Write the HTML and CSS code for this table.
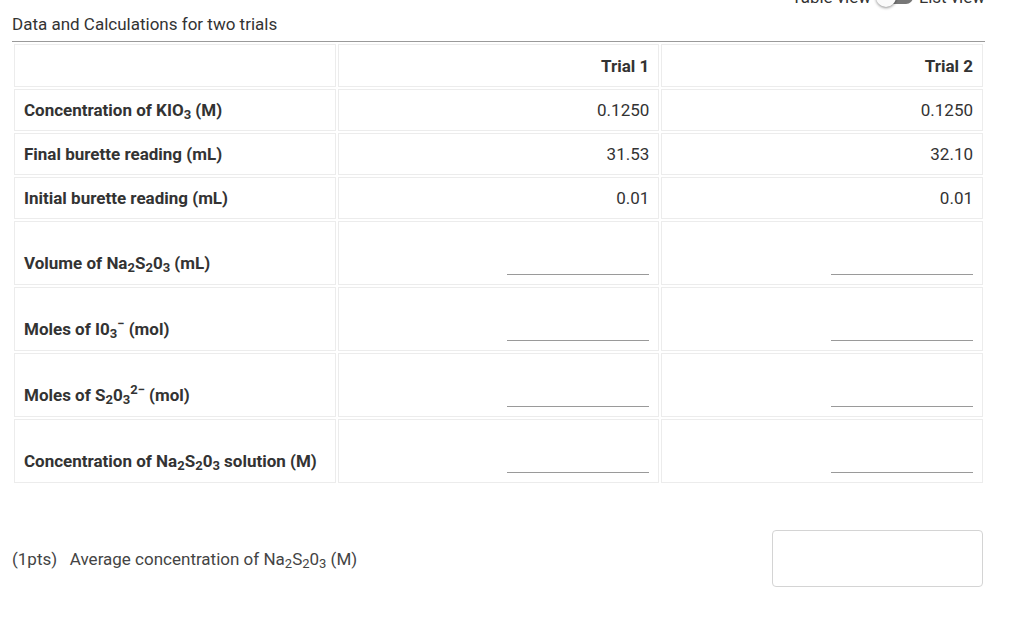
FILE: index.html
```html
<!DOCTYPE html>
<html>
<head>
<meta charset="utf-8">
<link rel="stylesheet" href="styles.css">
</head>
<body>
<div class="page">
  <div class="toggle-row">
    <span class="toggle-label">Table view</span>
    <span class="switch"><span class="knob"></span></span>
    <span class="toggle-label">List view</span>
  </div>
  <div class="title">Data and Calculations for two trials</div>
  <table class="data">
    <tr class="row-head">
      <td class="label"></td>
      <td class="num head">Trial 1</td>
      <td class="num head">Trial 2</td>
    </tr>
    <tr class="row-val">
      <td class="label">Concentration of KIO<sub>3</sub> (M)</td>
      <td class="num val">0.1250</td>
      <td class="num val">0.1250</td>
    </tr>
    <tr class="row-val">
      <td class="label">Final burette reading (mL)</td>
      <td class="num val">31.53</td>
      <td class="num val">32.10</td>
    </tr>
    <tr class="row-val">
      <td class="label">Initial burette reading (mL)</td>
      <td class="num val">0.01</td>
      <td class="num val">0.01</td>
    </tr>
    <tr class="row-in">
      <td class="label">Volume of Na<sub>2</sub>S<sub>2</sub>0<sub>3</sub> (mL)</td>
      <td class="num"><span class="blank"></span></td>
      <td class="num"><span class="blank"></span></td>
    </tr>
    <tr class="row-in">
      <td class="label">Moles of I0<sub>3</sub><sup>−</sup> (mol)</td>
      <td class="num"><span class="blank"></span></td>
      <td class="num"><span class="blank"></span></td>
    </tr>
    <tr class="row-in">
      <td class="label">Moles of S<sub>2</sub>0<sub>3</sub><sup>2−</sup> (mol)</td>
      <td class="num"><span class="blank"></span></td>
      <td class="num"><span class="blank"></span></td>
    </tr>
    <tr class="row-in">
      <td class="label">Concentration of Na<sub>2</sub>S<sub>2</sub>0<sub>3</sub> solution (M)</td>
      <td class="num"><span class="blank"></span></td>
      <td class="num"><span class="blank"></span></td>
    </tr>
  </table>
  <div class="avg">
    <span class="avg-text">(1pts)&nbsp;&nbsp; Average concentration of Na<sub>2</sub>S<sub>2</sub>0<sub>3</sub> (M)</span>
    <span class="avg-box"></span>
  </div>
</div>
</body>
</html>
```

FILE: styles.css
```css
html, body {
  margin: 0;
  padding: 0;
  background: #fff;
}
body {
  font-family: Roboto, "Liberation Sans", sans-serif;
  color: #333;
  overflow: hidden;
}
.page {
  padding: 0 39px 0 12px;
}
.toggle-row {
  display: flex;
  justify-content: flex-end;
  align-items: center;
  height: 20px;
  margin-top: -13px;
  font-size: 17px;
  color: #333;
}
.toggle-label {
  line-height: 20px;
}
.switch {
  position: relative;
  width: 34px;
  height: 14px;
  margin: 0 6px 0 8px;
  background: #777;
  border-radius: 7px;
}
.knob {
  position: absolute;
  left: -3px;
  top: -3px;
  width: 20px;
  height: 20px;
  border-radius: 50%;
  background: #fafafa;
  box-shadow: 0 1px 3px rgba(0,0,0,0.45);
}
.title {
  margin-top: 7px;
  font-size: 17px;
  line-height: 20px;
  padding-bottom: 7px;
  border-bottom: 1px solid #9a9a9a;
}
.data {
  width: 100%;
  border-collapse: separate;
  border-spacing: 2px;
  table-layout: fixed;
  margin: 0;
}
.data td {
  box-sizing: border-box;
  border: 1px solid #ececec;
  padding: 0 9px;
}
.label {
  font-size: 17px;
  font-weight: 700;
  color: #333;
  text-align: left;
}
.num {
  text-align: right;
}
.head {
  font-size: 17px;
  font-weight: 700;
}
.val {
  font-size: 17px;
}
.row-head td { height: 43px; }
.row-val td { height: 42px; }
.row-val td.label { padding-top: 0; }
.row-in td {
  height: 64px;
  vertical-align: bottom;
  padding-bottom: 9px;
}
.row-in td.label {
  padding-bottom: 11px;
  line-height: 20px;
}
.blank {
  display: inline-block;
  width: 142px;
  height: 30px;
  border-bottom: 1px solid #9a9a9a;
  vertical-align: bottom;
}
sub, sup {
  font-size: 13px;
  line-height: 0;
}
sub { vertical-align: -3px; }
sup { vertical-align: 7px; }
.avg {
  display: flex;
  align-items: center;
  justify-content: space-between;
  margin-top: 45px;
  padding-right: 2px;
}
.avg-text {
  font-size: 17px;
  color: #444;
}
.avg-box {
  width: 209px;
  height: 55px;
  border: 1px solid #d4d4d4;
  border-radius: 4px;
}
```
